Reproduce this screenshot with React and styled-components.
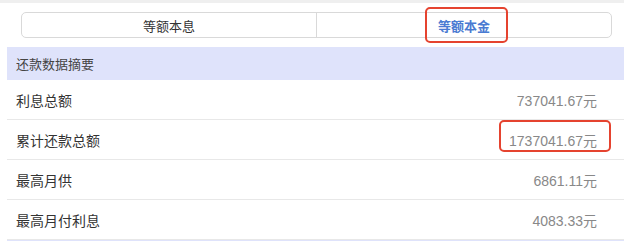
import React from 'react';
import styled, {createGlobalStyle} from 'styled-components';

const GlobalStyle = createGlobalStyle`
  body {
    margin: 0;
    background: #ffffff;
    font-family: "Liberation Sans", "Noto Sans CJK SC", sans-serif;
  }
`;

const rows = [
    {label: '利息总额', value: '737041.67元'},
    {label: '累计还款总额', value: '1737041.67元', marked: true},
    {label: '最高月供', value: '6861.11元'},
    {label: '最高月付利息', value: '4083.33元'},
];

const App = () => {
    return (
        <Page>
            <GlobalStyle/>
            <TopStrip/>
            <TabWrap>
                <TabBar>
                    <Tab>等额本息</Tab>
                    <Tab $active>
                        <Marked>
                            等额本金
                            <RedBox $top={-9} $bottom={-8} $left={-13} $right={-18}/>
                        </Marked>
                    </Tab>
                </TabBar>
            </TabWrap>

            <Summary>
                <Band>还款数据摘要</Band>
                {rows.map(r => (
                    <Row key={r.label}>
                        <Label>{r.label}</Label>
                        <Value>
                            {r.value}
                            {r.marked && <RedBox $top={-10} $bottom={-2} $left={-10} $right={-14}/>}
                        </Value>
                    </Row>
                ))}
                <Band $thin/>
            </Summary>
        </Page>
    );
};

export default App;

const Page = styled.div`
  width: 624px;
  height: 241px;
  overflow: hidden;
`;

const TopStrip = styled.div`
  height: 3px;
  background: #efefef;
`;

const TabWrap = styled.div`
  padding: 9px 12px 9px 21px;
`;

const TabBar = styled.div`
  display: flex;
  height: 26px;
  border: 1px solid #d9d9d9;
  border-radius: 5px;
  box-sizing: border-box;
`;

const Tab = styled.div`
  flex: 1;
  display: flex;
  align-items: center;
  justify-content: center;
  font-size: 13px;
  color: ${p => (p.$active ? '#4a7bd2' : '#333333')};
  font-weight: ${p => (p.$active ? 'bold' : 'normal')};
  & + & {
    border-left: 1px solid #d9d9d9;
  }
`;

const Marked = styled.span`
  position: relative;
`;

const RedBox = styled.span`
  position: absolute;
  top: ${p => p.$top}px;
  bottom: ${p => p.$bottom}px;
  left: ${p => p.$left}px;
  right: ${p => p.$right}px;
  border: 2px solid #e5432f;
  border-radius: 5px;
`;

const Summary = styled.div`
  margin-left: 7px;
`;

const Band = styled.div`
  height: ${p => (p.$thin ? '10px' : '33px')};
  background: #dfe3fb;
  padding-left: 9px;
  display: flex;
  align-items: center;
  font-size: 13px;
  color: #444444;
`;

const Row = styled.div`
  height: 39px;
  display: flex;
  align-items: center;
  justify-content: space-between;
  padding: 0 27px 0 9px;
  border-bottom: 1px solid #e8e8e8;
  font-size: 14px;
`;

const Label = styled.span`
  color: #333333;
`;

const Value = styled.span`
  position: relative;
  color: #888888;
`;
